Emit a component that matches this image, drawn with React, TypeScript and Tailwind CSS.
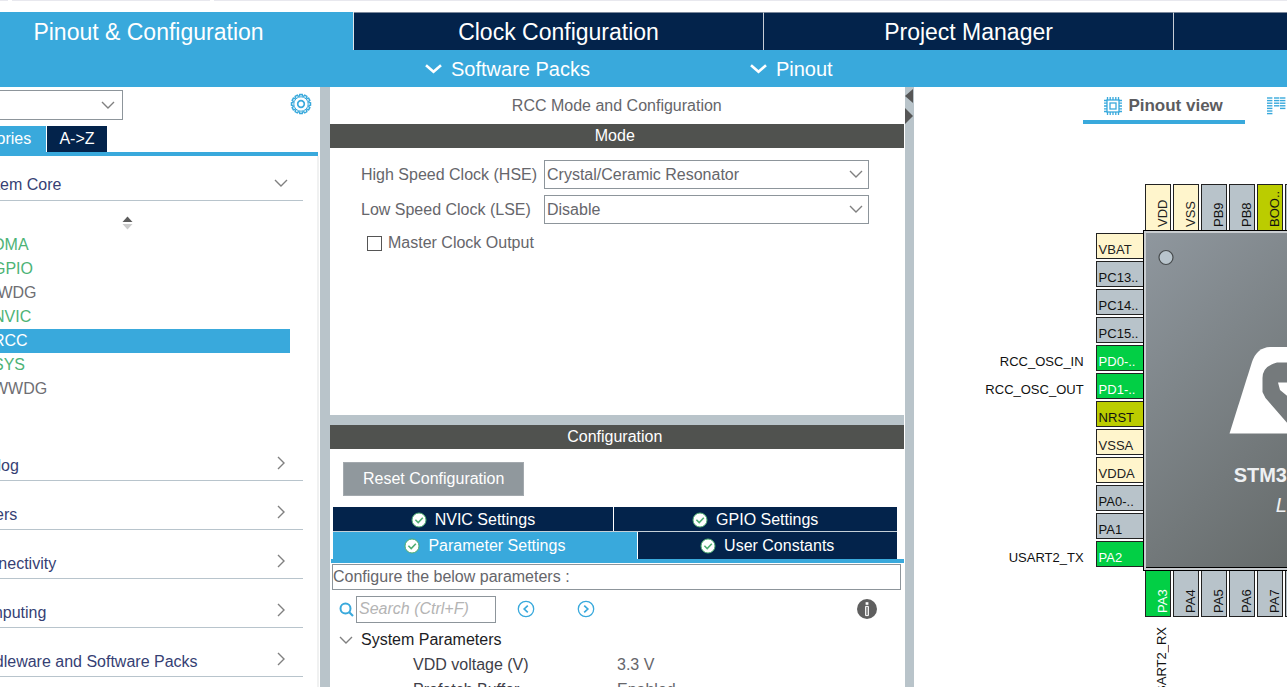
import React from "react";

type PinKind = "power" | "free" | "reset" | "used";

interface Pin {
  name: string;
  kind: PinKind;
  signal?: string;
}

const pinColors: Record<PinKind, string> = {
  power: "bg-[#fff5cc] text-[#222222]",
  free: "bg-[#b8c3ca] text-[#111111]",
  reset: "bg-[#bbcc00] text-[#111111]",
  used: "bg-[#02cf45] text-white",
};

const leftPins: Pin[] = [
  { name: "VBAT", kind: "power" },
  { name: "PC13..", kind: "free" },
  { name: "PC14..", kind: "free" },
  { name: "PC15..", kind: "free" },
  { name: "PD0-..", kind: "used", signal: "RCC_OSC_IN" },
  { name: "PD1-..", kind: "used", signal: "RCC_OSC_OUT" },
  { name: "NRST", kind: "reset" },
  { name: "VSSA", kind: "power" },
  { name: "VDDA", kind: "power" },
  { name: "PA0-..", kind: "free" },
  { name: "PA1", kind: "free" },
  { name: "PA2", kind: "used", signal: "USART2_TX" },
];

const topPins: Pin[] = [
  { name: "VDD", kind: "power" },
  { name: "VSS", kind: "power" },
  { name: "PB9", kind: "free" },
  { name: "PB8", kind: "free" },
  { name: "BOO..", kind: "reset" },
  { name: "PB7", kind: "free" },
];

const bottomPins: Pin[] = [
  { name: "PA3", kind: "used", signal: "USART2_RX" },
  { name: "PA4", kind: "free" },
  { name: "PA5", kind: "free" },
  { name: "PA6", kind: "free" },
  { name: "PA7", kind: "free" },
  { name: "PB0", kind: "free" },
];

const peripherals = [
  { name: "DMA", color: "text-[#4db376]" },
  { name: "GPIO", color: "text-[#4db376]" },
  { name: "IWDG", color: "text-[#6e6e73]" },
  { name: "NVIC", color: "text-[#4db376]" },
  { name: "RCC", color: "bg-[#39a9dc] text-white" },
  { name: "SYS", color: "text-[#4db376]" },
  { name: "WWDG", color: "text-[#6e6e73]" },
];

const categories = ["Analog", "Timers", "Connectivity", "Computing", "Middleware and Software Packs"];

function ChevronDown({ className = "" }: { className?: string }) {
  return (
    <svg className={className} width="14" height="8" viewBox="0 0 14 8" fill="none" stroke="currentColor" strokeWidth="1.4" aria-hidden="true">
      <path d="M1 1l6 6 6-6" />
    </svg>
  );
}

function ChevronRight() {
  return (
    <svg width="8" height="14" viewBox="0 0 8 14" fill="none" stroke="#808080" strokeWidth="1.4" aria-hidden="true">
      <path d="M1 1l6 6-6 6" />
    </svg>
  );
}

function BoldChevron() {
  return (
    <svg width="17" height="10" viewBox="0 0 17 10" fill="none" stroke="#ffffff" strokeWidth="2.6" aria-hidden="true">
      <path d="M1 1.2l7.5 6.6L16 1.2" />
    </svg>
  );
}

function Gear() {
  const teeth = Array.from({ length: 12 }, (_, i) => i * 30);
  return (
    <svg width="22" height="22" viewBox="-11 -11 22 22" fill="none" stroke="#39a9dc" aria-hidden="true">
      {teeth.map((a) => (
        <path key={a} d="M-1.7 -7.4L-1.2 -9.5H1.2L1.7 -7.4" strokeWidth="1.5" transform={`rotate(${a})`} />
      ))}
      <circle r="7.2" strokeWidth="1" />
      <circle r="3.3" strokeWidth="1.7" />
    </svg>
  );
}

function CheckBadge() {
  return (
    <svg width="16" height="16" viewBox="0 0 16 16" aria-hidden="true">
      <circle cx="8" cy="8" r="7" fill="#ffffff" stroke="#4fae72" strokeWidth="1" />
      <path d="M4.4 7.8l2.8 2.8 4.6-4.8" fill="none" stroke="#4fae72" strokeWidth="1.6" />
    </svg>
  );
}

function ArrowCircle({ d }: { d: string }) {
  return (
    <svg width="18" height="18" viewBox="0 0 18 18" fill="none" stroke="#39a9dc" aria-hidden="true">
      <circle cx="9" cy="9" r="7.7" strokeWidth="1.3" />
      <path d={d} strokeWidth="1.7" />
    </svg>
  );
}

function ChipIcon() {
  const ticks = [3.5, 6.2, 9, 11.8, 14.5];
  return (
    <svg width="18" height="18" viewBox="0 0 18 18" fill="none" stroke="#39a9dc" aria-hidden="true">
      <rect x="3" y="3" width="12" height="12" strokeWidth="1.3" />
      <rect x="6" y="6" width="6" height="6" strokeWidth="1.3" />
      {ticks.map((t) => (
        <path key={t} d={`M${t} 0v3M${t} 15v3M0 ${t}h3M15 ${t}h3`} strokeWidth="1.3" />
      ))}
    </svg>
  );
}

function SystemIcon() {
  const columns = [
    { x: 0, n: 7 },
    { x: 7, n: 4 },
    { x: 13, n: 5 },
  ];
  return (
    <svg width="20" height="18" viewBox="0 0 20 18" stroke="#39a9dc" aria-hidden="true">
      {columns.map((c) =>
        Array.from({ length: c.n }, (_, i) => (
          <path key={`${c.x}-${i}`} d={`M${c.x} ${1 + i * 2.6}h5.4`} strokeWidth="1.4" />
        )),
      )}
    </svg>
  );
}

function SectionBar({ children }: { children: React.ReactNode }) {
  return (
    <h2 className="flex h-6 shrink-0 items-center justify-center bg-[#50524f] pr-1 text-white">{children}</h2>
  );
}

function TopBar() {
  return (
    <header className="shrink-0">
      <div className="flex h-3 gap-1 bg-white">
        <div className="h-px w-2 bg-[#e8e8ee]" />
        <div className="h-px w-[198px] bg-[#e8e8ee]" />
        <div className="h-px flex-1 bg-[#e8e8ee]" />
      </div>
      <nav className="-mr-[297px] -ml-14 grid h-[38px] grid-cols-4 text-[23px] text-white">
        <button type="button" className="border-r border-[#dfe6ea] bg-[#39a9dc] pt-[2px]">Pinout &amp; Configuration</button>
        <button type="button" className="border-t border-r border-t-[#7b889b] border-r-[#c6cdd6] bg-[#03234b] pt-px">Clock Configuration</button>
        <button type="button" className="border-t border-r border-t-[#7b889b] border-r-[#c6cdd6] bg-[#03234b] pt-px">Project Manager</button>
        <button type="button" className="border-t border-t-[#7b889b] bg-[#03234b] pt-px">Tools</button>
      </nav>
      <div className="flex h-[37px] items-center gap-40 bg-[#39a9dc] pl-[425px] text-xl text-white">
        <button type="button" className="flex items-center gap-[9px]"><BoldChevron />Software Packs</button>
        <button type="button" className="flex items-center gap-[9px]"><BoldChevron />Pinout</button>
      </div>
    </header>
  );
}

function Sidebar() {
  return (
    <aside className="w-80 shrink-0 overflow-hidden text-[#363f74]">
      <div className="-ml-[61px] flex h-full flex-col">
        <div className="flex items-start justify-between pt-[3px] pr-2">
          <div className="relative w-[184px]">
            <select aria-label="Search peripheral" className="block h-[30px] w-full appearance-none border border-[#8d959b] bg-white" />
            <ChevronDown className="pointer-events-none absolute top-[11px] right-2 text-[#808080]" />
          </div>
          <button type="button" aria-label="Settings" className="mt-[3px]"><Gear /></button>
        </div>
        <div className="mt-[6px] mr-[2px] flex border-b-4 border-[#39a9dc] text-white">
          <button type="button" className="h-[26px] w-[108px] border-r border-white bg-[#39a9dc] text-center">Categories</button>
          <button type="button" className="h-[26px] w-[60px] bg-[#03234b] text-center">A-&gt;Z</button>
        </div>
        <div className="mr-px min-h-0 flex-1 overflow-hidden border-r-2 border-[#f0f1f1]">
          <button type="button" className="flex h-[45px] w-[364px] items-center justify-between border-b border-[#b8c4cc] pt-[14px] pr-[15px] pl-[30px]">
            System Core
            <ChevronDown className="-mt-1 text-[#808080]" />
          </button>
          <div className="flex h-8 items-center pt-3 pl-[183px]">
            <svg width="11" height="14" viewBox="0 0 11 14" aria-hidden="true">
              <path d="M5.5 0.5L10.5 6h-10z" fill="#5c5c5c" />
              <path d="M5.5 13.5L10.5 8h-10z" fill="#cccccc" />
            </svg>
          </div>
          <ul className="w-[351px]">
            {peripherals.map((p) => (
              <li key={p.name} className={`h-6 pl-[54px] leading-6 ${p.color}`}>{p.name}</li>
            ))}
          </ul>
          <div className="mt-[31px]">
            {categories.map((c) => (
              <button key={c} type="button" className="flex h-[49px] w-[364px] items-center justify-between border-b border-[#b8c4cc] pt-[20px] pr-[18px] pl-[30px]">
                {c}
                <span className="-mt-[6px]"><ChevronRight /></span>
              </button>
            ))}
          </div>
        </div>
      </div>
    </aside>
  );
}

function ClockRow({ id, label, value }: { id: string; label: string; value: string }) {
  return (
    <div className="flex items-center gap-[3px]">
      <label htmlFor={id} className="w-[180px] shrink-0 whitespace-nowrap">{label}</label>
      <div className="relative flex-1">
        <select id={id} className="block h-[29px] w-full appearance-none border border-[#8d959b] bg-white px-[2px]">
          <option>{value}</option>
        </select>
        <ChevronDown className="pointer-events-none absolute top-[10px] right-[6px] text-[#808080]" />
      </div>
    </div>
  );
}

function ConfigPanel() {
  return (
    <main className="flex min-w-0 flex-[573] flex-col overflow-hidden pr-px text-[#66666b]">
      <h1 className="flex h-[37px] shrink-0 items-center justify-center">RCC Mode and Configuration</h1>
      <SectionBar>Mode</SectionBar>
      <section className="flex h-[267px] shrink-0 flex-col gap-[6px] pt-3 pr-[35px] pl-[31px]">
        <ClockRow id="hse" label="High Speed Clock (HSE)" value="Crystal/Ceramic Resonator" />
        <ClockRow id="lse" label="Low Speed Clock (LSE)" value="Disable" />
        <label className="mt-px flex items-center gap-[6px] pl-[6px]">
          <input type="checkbox" className="size-[15px] appearance-none border border-[#555555] bg-white" />
          Master Clock Output
        </label>
      </section>
      <div className="h-[10px] shrink-0 bg-[#b9c4ca]" />
      <SectionBar>Configuration</SectionBar>
      <section className="flex flex-col">
        <div className="pt-[13px] pl-[13px]">
          <button type="button" className="block h-[34px] border border-[#a3a9ae] bg-[#90989d] px-[19px] text-white">Reset Configuration</button>
        </div>
        <div className="mt-[11px] mr-[7px] ml-[3px] flex h-6 text-white">
          <button type="button" className="flex flex-[280] items-center justify-center gap-2 border-r border-white bg-[#03234b] pt-[2px]"><CheckBadge />NVIC Settings</button>
          <button type="button" className="flex flex-[283] items-center justify-center gap-2 bg-[#03234b] pt-[2px]"><CheckBadge />GPIO Settings</button>
        </div>
        <div className="ml-px border-b-4 border-[#39a9dc]">
          <div className="mr-[7px] ml-[2px] flex h-7 border-t border-[#c5d0d8] text-white">
            <button type="button" className="flex flex-[304] items-center justify-center gap-2 border-r border-white bg-[#39a9dc]"><CheckBadge />Parameter Settings</button>
            <button type="button" className="flex flex-[259] items-center justify-center gap-2 bg-[#03234b]"><CheckBadge />User Constants</button>
          </div>
        </div>
        <div className="mt-px mr-[3px] ml-[2px] h-[26px] border border-[#8d959b] leading-6">Configure the below parameters :</div>
        <div className="flex h-[38px] items-center pl-[9px]">
          <svg width="15" height="15" viewBox="0 0 15 15" fill="none" stroke="#39a9dc" aria-hidden="true">
            <circle cx="6.5" cy="6.5" r="5" strokeWidth="2" />
            <path d="M10 10l4 4" strokeWidth="2.2" />
          </svg>
          <input aria-label="Search parameters" placeholder="Search (Ctrl+F)" className="ml-[2px] h-[27px] w-[140px] border border-[#8d959b] px-[2px] italic placeholder:text-[#b4b4b4]" />
          <button type="button" aria-label="Previous match" className="ml-[21px]"><ArrowCircle d="M10.8 5.6L7.2 9l3.6 3.4" /></button>
          <button type="button" aria-label="Next match" className="ml-[42px]"><ArrowCircle d="M7.2 5.6L10.8 9l-3.6 3.4" /></button>
          <button type="button" aria-label="Information" className="mr-[27px] ml-auto">
            <svg width="20" height="20" viewBox="0 0 20 20" aria-hidden="true">
              <circle cx="10" cy="10" r="10" fill="#5f5f5f" />
              <rect x="8.6" y="3.2" width="2.800" height="2.600" fill="#ffffff" />
              <path d="M8.6 7.400h2.800v9.200H8.600z" fill="#8a8a8a" stroke="#ffffff" strokeWidth="1" />
            </svg>
          </button>
        </div>
        <div className="flex h-6 items-center gap-2 pl-[9px] text-[#1c1c24]">
          <ChevronDown className="text-[#808080]" />
          System Parameters
        </div>
        <dl className="grid grid-cols-[204px_1fr] pl-[83px] leading-[25px]">
          <dt className="text-[#3e3e48]">VDD voltage (V)</dt>
          <dd>3.3 V</dd>
          <dt className="text-[#3e3e48]">Prefetch Buffer</dt>
          <dd>Enabled</dd>
        </dl>
      </section>
    </main>
  );
}

function VerticalPin({ pin }: { pin: Pin }) {
  return (
    <div className={`flex h-[47px] w-[26px] rotate-180 items-start justify-start border border-[#222222] pt-[3px] pr-[8px] pl-px [writing-mode:vertical-rl] ${pinColors[pin.kind]}`}>
      <span className="leading-[18px]">{pin.name}</span>
    </div>
  );
}

function Chip() {
  return (
    <div className="relative min-h-0 flex-1 overflow-hidden text-[13px] text-[#111111]">
      <div className="absolute top-[109px] left-0 flex w-[230px] flex-col gap-[2px]">
        {leftPins.map((pin) => (
          <div key={pin.name} className="flex h-[26px] items-stretch justify-end gap-3">
            <span className="pt-[9px] leading-[16px]">{pin.signal}</span>
            <span className={`w-12 border border-[#222222] pt-2 pl-[2px] leading-[16px] ${pinColors[pin.kind]}`}>{pin.name}</span>
          </div>
        ))}
      </div>
      <div className="absolute top-[60px] left-[231px] flex gap-[2px]">
        {topPins.map((pin) => (
          <VerticalPin key={pin.name} pin={pin} />
        ))}
      </div>
      <div className="absolute top-[446px] left-[231px] flex gap-[2px]">
        {bottomPins.map((pin) => (
          <VerticalPin key={pin.name} pin={pin} />
        ))}
      </div>
      <span className="absolute top-[503px] left-[240px] rotate-180 leading-[16px] [writing-mode:vertical-rl]">USART2_RX</span>
      <div className="absolute top-[106px] left-[229px] size-[341px] border border-black bg-[#c9cdd0] p-[2px]">
        <div className="relative h-full w-full border-b border-black bg-linear-to-br from-[#8f979e] to-[#565a57] text-center text-xl text-[#eef0f2]">
          <svg className="absolute top-0 left-0" width="335" height="335" viewBox="1146 233 335 335" aria-hidden="true">
            <circle cx="1166" cy="257.5" r="7" fill="#b8c4cc" stroke="#474b4d" strokeWidth="1.2" />
            <path d="M1229.5 433.5L1252 362q5-14.500 18-15H1400L1370 433.500z" fill="#ffffff" />
            <path d="M1400 362.5H1277q-14.500 3.500-14.500 15.500v14l3 6L1288 424h20V396.500h-20L1280 390l-2-7.500H1400z" fill="#757a7c" />
          </svg>
          <div className="pt-[229px] leading-[26px] font-bold">STM32F103C8Tx</div>
          <div className="pt-1 leading-[26px] italic">LQFP48</div>
        </div>
      </div>
    </div>
  );
}

function PinoutPanel() {
  return (
    <section className="flex min-w-0 flex-[373] flex-col overflow-hidden">
      <div className="flex h-[37px] shrink-0 pl-[169px] text-[17px] font-bold text-[#5c5c5f]">
        <button type="button" className="flex w-[162px] shrink-0 items-center justify-center gap-[6px] border-b-4 border-[#39a9dc] pt-1">
          <ChipIcon />
          Pinout view
        </button>
        <button type="button" className="ml-[22px] flex shrink-0 items-center gap-[6px]">
          <SystemIcon />
          System view
        </button>
      </div>
      <Chip />
    </section>
  );
}

export default function App() {
  return (
    <div className="flex h-screen flex-col overflow-hidden bg-white font-['Liberation_Sans',Arial,sans-serif] text-base">
      <TopBar />
      <div className="flex min-h-0 flex-1">
        <Sidebar />
        <div className="w-[10px] shrink-0 bg-[#b9c4ca]" />
        <ConfigPanel />
        <div className="flex w-[9px] shrink-0 flex-col bg-[#b9c4ca] pt-[2px]">
          <button type="button" aria-label="Collapse left">
            <svg className="block" width="9" height="14" viewBox="0 0 9 14" aria-hidden="true"><path d="M8 0v14L0 7z" fill="#565656" /></svg>
          </button>
          <button type="button" aria-label="Collapse right" className="mt-[5px]">
            <svg className="block" width="9" height="16" viewBox="0 0 9 16" aria-hidden="true"><path d="M0 0v16l8-8z" fill="#565656" /></svg>
          </button>
        </div>
        <PinoutPanel />
      </div>
    </div>
  );
}
